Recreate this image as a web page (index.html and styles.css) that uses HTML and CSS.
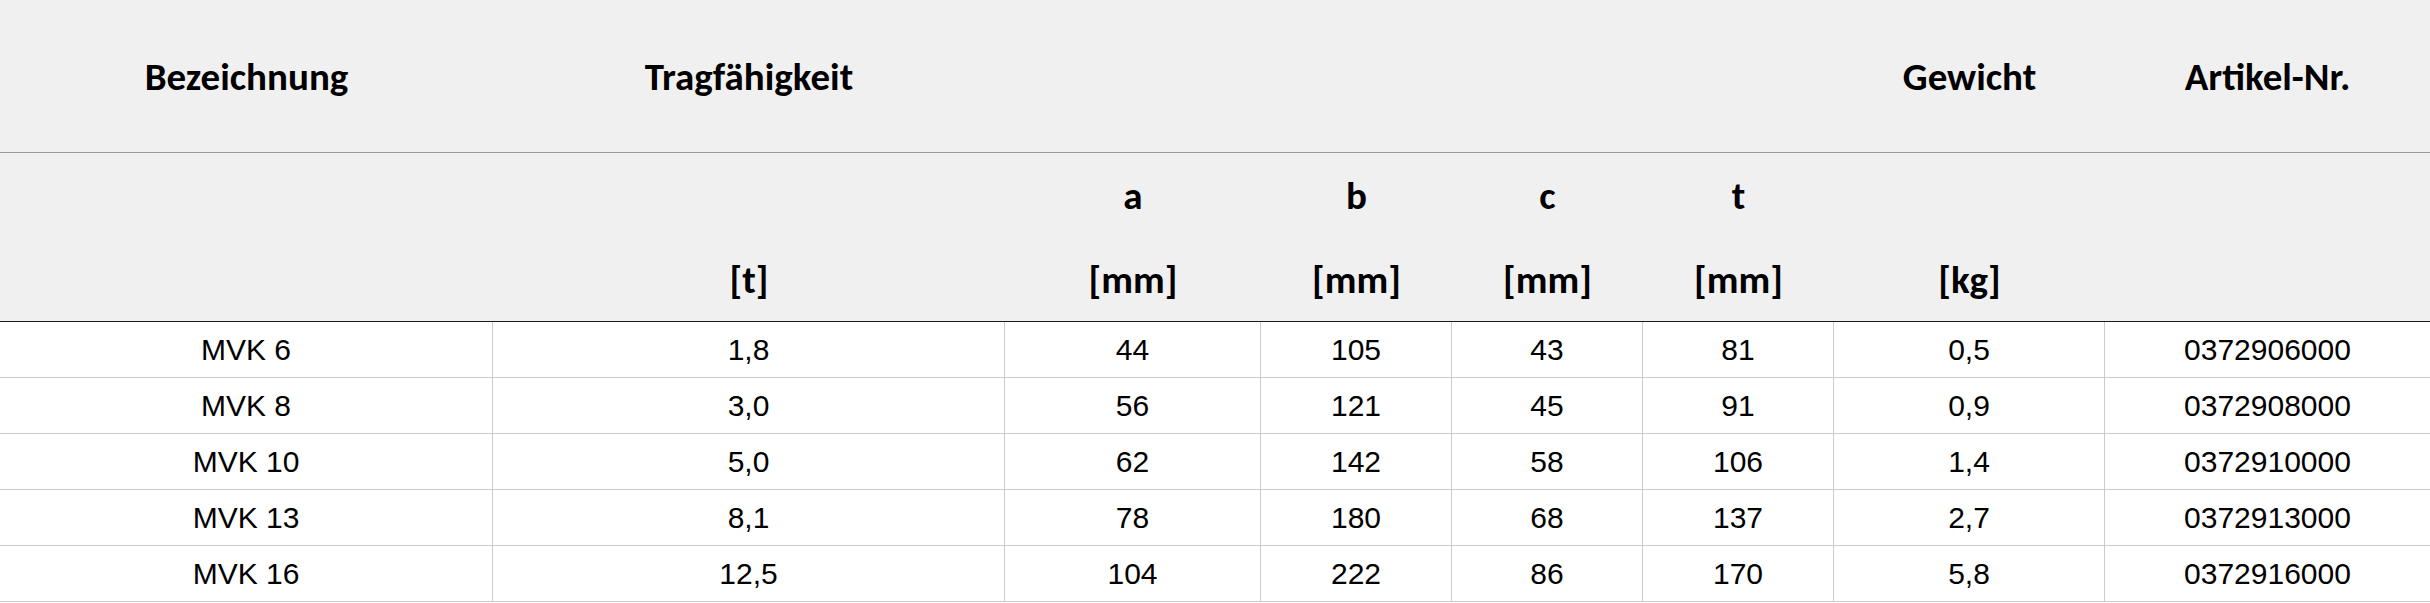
FILE: index.html
```html
<!DOCTYPE html>
<html lang="de">
<head>
<meta charset="utf-8">
<title>MVK</title>
<link rel="stylesheet" href="styles.css">
</head>
<body>
<table class="spec">
  <colgroup>
    <col class="c-bez"><col class="c-trag"><col class="c-a"><col class="c-dim"><col class="c-dim"><col class="c-dim"><col class="c-gew"><col class="c-art">
  </colgroup>
  <thead>
    <tr class="h1">
      <th>Bezeichnung</th><th>Tragfähigkeit</th><th></th><th></th><th></th><th></th><th>Gewicht</th><th>Artikel-Nr.</th>
    </tr>
    <tr class="h2">
      <th></th><th></th><th>a</th><th>b</th><th>c</th><th>t</th><th></th><th></th>
    </tr>
    <tr class="h3">
      <th></th><th>[t]</th><th>[mm]</th><th>[mm]</th><th>[mm]</th><th>[mm]</th><th>[kg]</th><th></th>
    </tr>
  </thead>
  <tbody>
    <tr><td>MVK 6</td><td>1,8</td><td>44</td><td>105</td><td>43</td><td>81</td><td>0,5</td><td>0372906000</td></tr>
    <tr><td>MVK 8</td><td>3,0</td><td>56</td><td>121</td><td>45</td><td>91</td><td>0,9</td><td>0372908000</td></tr>
    <tr><td>MVK 10</td><td>5,0</td><td>62</td><td>142</td><td>58</td><td>106</td><td>1,4</td><td>0372910000</td></tr>
    <tr><td>MVK 13</td><td>8,1</td><td>78</td><td>180</td><td>68</td><td>137</td><td>2,7</td><td>0372913000</td></tr>
    <tr><td>MVK 16</td><td>12,5</td><td>104</td><td>222</td><td>86</td><td>170</td><td>5,8</td><td>0372916000</td></tr>
  </tbody>
</table>
</body>
</html>
```

FILE: styles.css
```css
html, body {
  margin: 0;
  padding: 0;
  background: #ffffff;
}

.spec {
  width: 2430px;
  table-layout: fixed;
  border-collapse: separate;
  border-spacing: 0;
  color: #000;
}

.c-bez { width: 493px; }
.c-trag { width: 512px; }
.c-a { width: 256px; }
.c-dim { width: 191px; }
.c-gew { width: 271px; }
.c-art { width: 325px; }

.spec th {
  background: #f0f0f0;
  font-family: "Carlito", "Lato", "Open Sans", sans-serif;
  font-weight: 700;
  font-size: 39px;
  line-height: 1;
  padding: 0;
  text-align: center;
  vertical-align: middle;
}

.h1 th {
  height: 152px;
  border-bottom: 1px solid #999999;
}

.h2 th {
  height: 84px;
}

.h3 th {
  height: 84px;
  border-bottom: 1px solid #1a1a1a;
}

.spec td {
  font-family: "Liberation Sans", Arial, sans-serif;
  font-size: 30px;
  line-height: 1;
  height: 55px;
  padding: 0;
  text-align: center;
  vertical-align: middle;
  border-bottom: 1px solid #cccccc;
  border-right: 1px solid #cccccc;
}

.spec td:last-child {
  border-right: none;
}
```
